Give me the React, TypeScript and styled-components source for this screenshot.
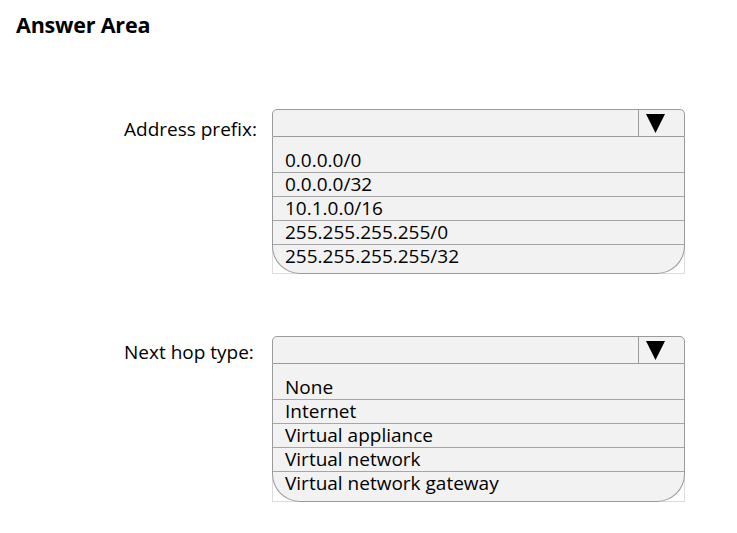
import React from "react";
import styled, { createGlobalStyle } from "styled-components";

const Global = createGlobalStyle`
  html, body { margin: 0; padding: 0; background: #ffffff; }
  body { font-family: "Open Sans", "Noto Sans", sans-serif; color: #000; }
`;

const Page = styled.div`
  padding: 10px 0 0 16px;
  width: 737px;
  height: 533px;
  box-sizing: border-box;
`;

const Title = styled.h1`
  margin: 0;
  font-size: 21.5px;
  line-height: 29px;
  font-weight: 700;
  letter-spacing: -0.2px;
`;

const Sections = styled.div`
  display: flex;
  flex-direction: column;
  gap: 62px;
  margin-top: 70px;
  margin-left: 108px;
`;

const Section = styled.div`
  display: grid;
  grid-template-columns: 148px 413px;
  align-items: start;
`;

const Label = styled.div<{ $offset: number }>`
  font-size: 19px;
  line-height: 24px;
  padding-top: ${(p) => p.$offset}px;
`;

const Frame = styled.div`
  display: flex;
  flex-direction: column;
`;

const Header = styled.div`
  display: flex;
  height: 26px;
  background: #f2f2f2;
  border: 1px solid #9a9a9a;
  border-radius: 5px 5px 0 0;
`;

const HeaderField = styled.div`
  flex: 1;
  border-right: 1px solid #9a9a9a;
`;

const ArrowCell = styled.div`
  width: 45px;
  box-sizing: border-box;
  padding-left: 7px;
  display: flex;
  align-items: center;
  justify-content: flex-start;
`;

const ListBox = styled.div`
  border: 1px solid #dcdcdc;
  border-top: none;
`;

const List = styled.ul<{ $bottom: number }>`
  list-style: none;
  margin: 0 -1px -1px -1px;
  padding: 0 0 ${(p) => p.$bottom}px 0;
  background: #f2f2f2;
  border: 1px solid #9a9a9a;
  border-top: none;
  border-radius: 0 0 28px 28px;
`;

const Item = styled.li<{ $first?: boolean }>`
  font-size: 19px;
  line-height: 23px;
  padding: ${(p) => (p.$first ? "12px" : "0")} 0 0 12px;
  border-top: ${(p) => (p.$first ? "none" : "1px solid #a6a6a6")};
  white-space: nowrap;
`;

const Arrow = () => (
  <svg width="19" height="19" viewBox="0 0 19 19">
    <polygon points="0,0 19,0 9.5,19" fill="#000" />
  </svg>
);

type DropProps = { label: string; options: string[]; offset: number; bottom: number };

const Dropdown = ({ label, options, offset, bottom }: DropProps) => (
  <Section>
    <Label $offset={offset}>{label}</Label>
    <Frame>
      <Header>
        <HeaderField />
        <ArrowCell>
          <Arrow />
        </ArrowCell>
      </Header>
      <ListBox>
        <List $bottom={bottom}>
          {options.map((o, i) => (
            <Item key={o} $first={i === 0}>
              {o}
            </Item>
          ))}
        </List>
      </ListBox>
    </Frame>
  </Section>
);

export default function App() {
  return (
    <>
      <Global />
      <Page>
        <Title>Answer Area</Title>
        <Sections>
          <Dropdown
            label="Address prefix:"
            offset={8}
            bottom={5}
            options={["0.0.0.0/0", "0.0.0.0/32", "10.1.0.0/16", "255.255.255.255/0", "255.255.255.255/32"]}
          />
          <Dropdown
            label="Next hop type:"
            offset={4}
            bottom={6}
            options={["None", "Internet", "Virtual appliance", "Virtual network", "Virtual network gateway"]}
          />
        </Sections>
      </Page>
    </>
  );
}
